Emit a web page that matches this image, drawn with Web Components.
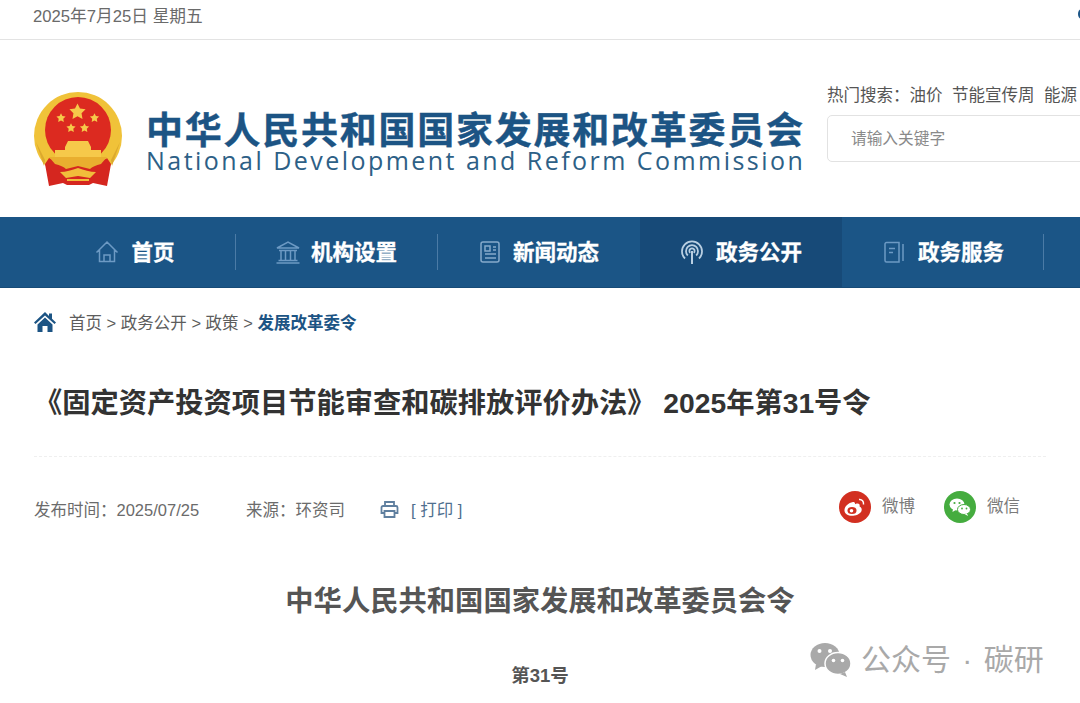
<!DOCTYPE html>
<html lang="zh">
<head>
<meta charset="utf-8">
<title>国家发展和改革委员会</title>
<style>
html,body{margin:0;padding:0;background:#fff;overflow:hidden;height:703px;}
body{font-family:"Liberation Sans","Noto Sans CJK SC",sans-serif;position:relative;}
</style>
</head>
<body>
<top-bar>2025年7月25日 星期五</top-bar>
<site-header></site-header>
<main-nav>
	<nav-item icon="home" first>首页</nav-item>
	<nav-item icon="bank">机构设置</nav-item>
	<nav-item icon="news" nosep>新闻动态</nav-item>
	<nav-item icon="signal" active nosep>政务公开</nav-item>
	<nav-item icon="book">政务服务</nav-item>
</main-nav>
<bread-crumbs>
	<span>首页 &gt; 政务公开 &gt; 政策 &gt; </span><b>发展改革委令</b>
</bread-crumbs>
<article-head>《固定资产投资项目节能审查和碳排放评价办法》 2025年第31号令</article-head>
<article-meta></article-meta>
<article-body></article-body>
<wx-mark>公众号 · 碳研</wx-mark>

<script>
const ICONS = {
	home: `<svg width="24" height="24" viewBox="0 0 24 24" fill="none" stroke="#6d9ac4" stroke-width="1.5"><path d="M1.5 12.5 12 2l10.500 10.500M4.500 10v11.500h15V10M9 21.500v-6.500h6v6.500"/></svg>`,
	bank: `<svg width="26" height="24" viewBox="0 0 26 24" fill="none" stroke="#6d9ac4" stroke-width="1.500"><path d="M2 8 13 2l11 6zM4 10.500h18M6 11v9M10.500 11v9M15.500 11v9M20 11v9M3.500 20.500h19M1.500 23h23"/></svg>`,
	news: `<svg width="22" height="24" viewBox="0 0 22 24" fill="none" stroke="#86aacb" stroke-width="1.500"><rect x="2" y="2" width="18" height="20" rx="2"/><rect x="6" y="6" width="5" height="5"/><path d="M14 7h3M14 10h3M6 14h11M6 18h11"/></svg>`,
	signal: `<svg width="24" height="24" viewBox="0 0 24 24" fill="none" stroke="#b9cfe2" stroke-width="1.800"><path d="M5 18.500a10 10 0 1 1 14 0M7.800 15.500a6 6 0 1 1 8.400 0M10.200 12.800a2.600 2.600 0 1 1 3.600 0"/><path d="M12 11v13" stroke-width="2"/></svg>`,
	book: `<svg width="24" height="24" viewBox="0 0 24 24" fill="none" stroke="#6d9ac4" stroke-width="1.500"><path d="M3 4a1.500 1.500 0 0 1 1.500-1.500H17V22H4.500A1.500 1.500 0 0 1 3 20.500zM7 8.500h6M7 12.500h4M21 4v17"/></svg>`
};

const STAR = '0,-1 .294,-.405 .951,-.309 .476,.155 .588,.809 0,.5 -.588,.809 -.476,.155 -.951,-.309 -.294,-.405';

class TopBar extends HTMLElement {
	constructor() {
		super();
		this.attachShadow({mode: 'open'}).innerHTML = `
<style>
:host{display:flex;justify-content:space-between;height:39px;padding-left:33px;border-bottom:1px solid #e3e3e3;font-size:16.700px;line-height:33px;color:#6a6a6a;overflow:hidden;}
i{width:7px;height:10px;margin:9px -5px 0 0;border-radius:50%;background:#1b5586;}
</style>
<span><slot></slot></span><i></i>`;
	}
}

class SiteHeader extends HTMLElement {
	constructor() {
		super();
		this.attachShadow({mode: 'open'}).innerHTML = `
<style>
:host{display:flex;height:177px;padding-left:34px;overflow:hidden;}
.emblem{margin-top:52px;flex:none;}
.names{margin:68px 0 0 24px;width:659px;flex:none;color:#1c5484;}
.cn{font-family:"Noto Sans CJK SC",sans-serif;font-size:37px;font-weight:700;line-height:40px;letter-spacing:1.750px;white-space:nowrap;-webkit-text-stroke:.4px #1c5484;}
.en{font-family:"Open Sans","Liberation Sans",sans-serif;font-size:25px;line-height:24px;letter-spacing:2.460px;white-space:nowrap;color:#2d6086;}
.side{margin:43px 0 0 22px;flex:none;}
.hot{font-size:16.500px;line-height:24px;color:#555;white-space:nowrap;}
.hot span{margin-right:9.500px;}
.box{margin-top:8px;width:300px;height:45px;border:1px solid #e2e2e2;border-radius:5px;padding-left:23px;line-height:46px;font-size:15.700px;color:#8a8a8a;}
</style>
<svg class="emblem" width="88" height="94" viewBox="0 0 88 94">
	<circle cx="44" cy="44" r="44" fill="#f0c239"/>
	<circle cx="44" cy="38" r="33" fill="#dc2a20"/>
	<g fill="#f6c94a">
		<polygon points="${STAR}" transform="translate(43.500 20) scale(8.500)"/>
		<polygon points="${STAR}" transform="translate(27 26) scale(4.800)"/>
		<polygon points="${STAR}" transform="translate(60.500 26) scale(4.800)"/>
		<polygon points="${STAR}" transform="translate(37 36) scale(4.800)"/>
		<polygon points="${STAR}" transform="translate(50.500 36) scale(4.800)"/>
		<path d="M34 49h20l3 6H31zM31 55h26v3H31zM21 58h46v7H21z"/>
	</g>
	<path d="M11 68 2 50l8 24zM77 68l9-18-8 24z" fill="#dca92d"/>
	<path d="M11 72 15 66c5 4 58 4 58 0l4 6-4 22-14-3-4 2H33l-4-2-14 3z" fill="#d5261f"/>
	<path d="M15 65h58l-6 7c-5 1-9 3-11 5l-12-3-12 3c-2-2-6-4-11-5z" fill="#e9ae2f"/>
	<path d="M26 80c6 0 12-2 18-4 6 2 12 4 18 4l-6 6-12-2-12 2z" fill="#f1bd3b"/>
	<path d="M33 88h22" stroke="#f1bd3b" stroke-width="2"/>
</svg>
<div class="names">
	<div class="cn">中华人民共和国国家发展和改革委员会</div>
	<div class="en">National Development and Reform Commission</div>
</div>
<div class="side">
	<div class="hot">热门搜索：<span>油价</span><span>节能宣传周</span>能源</div>
	<div class="box">请输入关键字</div>
</div>`;
	}
}

class MainNav extends HTMLElement {
	constructor() {
		super();
		this.attachShadow({mode: 'open'}).innerHTML = `
<style>
:host{display:flex;height:71px;padding-left:34px;background:#1b5586;border-bottom:1px solid #174b77;box-sizing:border-box;overflow:hidden;}
</style>
<slot></slot>`;
	}
}

class NavItem extends HTMLElement {
	constructor() {
		super();
		const icon = ICONS[this.getAttribute('icon')];
		this.attachShadow({mode: 'open'}).innerHTML = `
<style>
:host{display:flex;align-items:center;justify-content:center;gap:12px;width:202px;flex:none;position:relative;box-sizing:border-box;color:#fff;font-size:21.500px;font-weight:700;-webkit-text-stroke:.3px #fff;}
:host([icon=bank]){gap:10px;padding-right:2px;}
:host([active]){background:#174a78;}
:host::after{content:"";position:absolute;right:0;top:17px;height:36px;width:1px;background:#4b7ba6;}
:host([active])::after,:host([nosep])::after{display:none;}
svg{display:block;}
span{margin-top:-4px;}
</style>
${icon}<span><slot></slot></span>`;
	}
}

class BreadCrumbs extends HTMLElement {
	constructor() {
		super();
		this.attachShadow({mode: 'open'}).innerHTML = `
<style>
:host{display:flex;align-items:center;height:69px;box-sizing:border-box;padding:0 0 2px 34px;font-size:16.500px;color:#5d5d5d;white-space:pre;}
svg{margin-right:13px;flex:none;}
::slotted(b){color:#1c5484;font-weight:700;}
</style>
<svg width="22" height="20" viewBox="0 0 22 20"><path d="M11 0 0 10.500l1.500 1.500L11 3.500 20.500 12l1.500-1.500-4-3.800V1.500h-3v2.400z" fill="#1c5484"/><path d="M3.500 12.500 11 5.500l7.500 7V20h-5v-6h-5v6h-5z" fill="#1c5484"/></svg>
<slot></slot>`;
	}
}

class ArticleHead extends HTMLElement {
	constructor() {
		super();
		this.attachShadow({mode: 'open'}).innerHTML = `
<style>
:host{display:block;margin:0 34px;height:100px;box-sizing:border-box;padding-top:25px;border-bottom:1px dashed #efefef;font-size:28.250px;line-height:42px;font-weight:700;color:#333;white-space:nowrap;}
</style>
<slot></slot>`;
	}
}

class ShareBtn extends HTMLElement {
	constructor() {
		super();
		this.attachShadow({mode: 'open'}).innerHTML = `
<style>
:host{display:inline-flex;align-items:center;gap:11px;font-size:16.500px;color:#7b7b7b;white-space:normal;}
span{margin-top:-4px;}
</style>
<slot name="icon"></slot><span><slot></slot></span>`;
	}
}
class ArticleMeta extends HTMLElement {
	constructor() {
		super();
		this.attachShadow({mode: 'open'}).innerHTML = `
<style>
:host{display:flex;align-items:center;height:100px;padding:0 60px 0 34px;font-size:16.500px;color:#6b6b6b;white-space:pre;}
.date,.src{padding-top:4px;}
.src{margin-left:47px;}
.print{margin-left:35px;padding-top:4px;display:flex;align-items:center;gap:12px;color:#4f6f8f;}
.share{margin-left:auto;display:flex;gap:29px;}
</style>
<span class="date">发布时间：2025/07/25</span>
<span class="src">来源：环资司</span>
<span class="print">
	<svg width="19" height="17" viewBox="0 0 19 17" fill="none" stroke="#5f7f9f" stroke-width="1.800"><path d="M5 5V1h9v4M4.500 12H1.500V6.500a1.500 1.500 0 0 1 1.500-1.500h13a1.500 1.500 0 0 1 1.500 1.500V12h-3"/><path d="M4.500 10h10v6h-10z"/></svg>
	<span>[ 打印 ]</span>
</span>
<div class="share">
	<share-btn>
		<svg slot="icon" width="32" height="32" viewBox="0 0 32 32"><circle cx="16" cy="16" r="16" fill="#d22f20"/><path d="M14 11c-5 1-9 5-8.500 9 .5 3.500 5 5.500 10 4.500s8-4 7-7c-.5-1.500-2-2-2-2 .5-1.500 0-3-2-3-1 0-2 .5-2.500.8 0 0 .5-2.800-2-2.300z" fill="#fff"/><ellipse cx="13" cy="19.500" rx="4.500" ry="3.500" fill="#d22f20"/><circle cx="12.500" cy="19.800" r="1.800" fill="#fff"/><path d="M20 8.500c3-.5 5 2 4.500 5" fill="none" stroke="#fff" stroke-width="1.500"/></svg>微博</share-btn>
	<share-btn>
		<svg slot="icon" width="32" height="32" viewBox="0 0 32 32"><circle cx="16" cy="16" r="16" fill="#45ac3f"/><ellipse cx="13" cy="13.500" rx="7.500" ry="6" fill="#fff"/><path d="M9 17.500 8.500 21l4-2.500z" fill="#fff"/><ellipse cx="20" cy="18.500" rx="6.500" ry="5" fill="#fff" stroke="#45ac3f"/><path d="M23 22.500l1 2.500-3.500-2z" fill="#fff"/><circle cx="10.500" cy="12" r="1.100" fill="#45ac3f"/><circle cx="15.500" cy="12" r="1.100" fill="#45ac3f"/><circle cx="18" cy="17.500" r=".9" fill="#45ac3f"/><circle cx="22.500" cy="17.500" r=".9" fill="#45ac3f"/></svg>微信</share-btn>
</div>`;
	}
}

class ArticleBody extends HTMLElement {
	constructor() {
		super();
		this.attachShadow({mode: 'open'}).innerHTML = `
<style>
:host{display:block;text-align:center;color:#555;font-weight:700;}
.t{margin-top:24px;font-size:28.300px;line-height:40px;}
.n{margin-top:42px;font-size:18.500px;line-height:26px;}
</style>
<div class="t">中华人民共和国国家发展和改革委员会令</div>
<div class="n">第31号</div>`;
	}
}

class WxMark extends HTMLElement {
	constructor() {
		super();
		this.attachShadow({mode: 'open'}).innerHTML = `
<style>
:host{position:absolute;left:810px;top:639px;display:flex;align-items:center;gap:9px;font-size:30px;line-height:42px;word-spacing:3px;color:#a9a9a9;white-space:pre;}
</style>
<svg width="42" height="36" viewBox="0 0 42 36"><ellipse cx="15" cy="13" rx="14.500" ry="12" fill="#a9a9a9"/><path d="M6 22l-1 6 7-4z" fill="#a9a9a9"/><ellipse cx="28" cy="21.500" rx="13" ry="11" fill="#a9a9a9" stroke="#fff" stroke-width="1.500"/><path d="M35 30l2 5-7-3z" fill="#a9a9a9"/><circle cx="9.500" cy="9" r="2" fill="#fff"/><circle cx="20" cy="9" r="2" fill="#fff"/><circle cx="23.500" cy="18.500" r="1.800" fill="#fff"/><circle cx="32.500" cy="18.500" r="1.800" fill="#fff"/></svg>
<span><slot></slot></span>`;
	}
}

customElements.define('top-bar', TopBar);
customElements.define('site-header', SiteHeader);
customElements.define('main-nav', MainNav);
customElements.define('nav-item', NavItem);
customElements.define('bread-crumbs', BreadCrumbs);
customElements.define('article-head', ArticleHead);
customElements.define('share-btn', ShareBtn);
customElements.define('article-meta', ArticleMeta);
customElements.define('article-body', ArticleBody);
customElements.define('wx-mark', WxMark);
</script>
</body>
</html>
